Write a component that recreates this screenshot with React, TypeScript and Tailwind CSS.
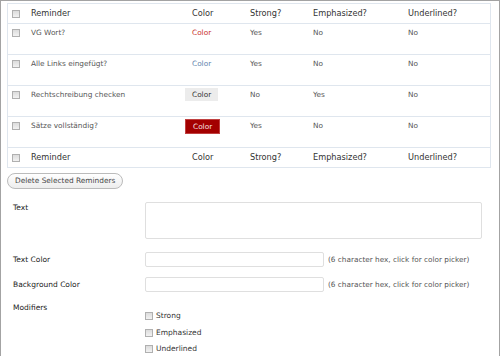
import React from "react";

const font = { fontFamily: '"DejaVu Sans", Verdana, sans-serif' };

type Row = {
  text: string;
  color: "red" | "blue" | "gray" | "darkred";
  strong: string;
  em: string;
  under: string;
};

const rows: Row[] = [
  { text: "VG Wort?", color: "red", strong: "Yes", em: "No", under: "No" },
  { text: "Alle Links eingefügt?", color: "blue", strong: "Yes", em: "No", under: "No" },
  { text: "Rechtschreibung checken", color: "gray", strong: "No", em: "Yes", under: "No" },
  { text: "Sätze vollständig?", color: "darkred", strong: "Yes", em: "No", under: "No" },
];

function Box() {
  return (
    <span className="block w-[8px] h-[8px] border border-[#b0b0b0] bg-gradient-to-b from-[#dcdcdc] to-[#f2f2f2]" />
  );
}

function ColorTag({ color }: { color: Row["color"] }) {
  const cls =
    color === "red"
      ? "text-[#c8322d]"
      : color === "blue"
      ? "text-[#6384ad]"
      : color === "gray"
      ? "bg-[#ececec] text-[#333]"
      : "bg-[#a30000] text-[#f5e0e0] border border-[#c04040]";
  return (
    <span className={`inline-block px-[7px] py-[2px] leading-[9px] ${cls}`}>Color</span>
  );
}

const grid = "grid grid-cols-[19px_154px_65px_63px_95px_1fr]";

function HeadRow({ last }: { last?: boolean }) {
  return (
    <div
      className={`${grid} items-center text-[8.2px] text-[#333] ${
        last ? "h-[19px]" : "h-[20px] border-b border-[#dfe6ee]"
      }`}
    >
      <div className="pl-[4px]">
        <Box />
      </div>
      <div className="pl-[4px]">Reminder</div>
      <div className="pl-[11px]">Color</div>
      <div className="pl-[4px]">Strong?</div>
      <div className="pl-[4px]">Emphasized?</div>
      <div className="pl-[4px]">Underlined?</div>
    </div>
  );
}

export default function App() {
  return (
    <div
      className="w-[500px] h-[356px] overflow-hidden bg-white border-l border-t border-r border-[#a3a3a3] pl-[6px] pr-[8px] pt-[2px]"
      style={font}
    >
      <div className="border border-[#dfe6ee] text-[7.35px] text-[#555]">
        <HeadRow />
        {rows.map((r) => (
          <div key={r.text} className={`${grid} h-[31px] border-b border-[#dfe6ee] leading-[9px]`}>
            <div className="pl-[4px] pt-[5px]">
              <Box />
            </div>
            <div className="pl-[4px] pt-[4px]">{r.text}</div>
            <div className="pl-[4px] pt-[2px]">
              <ColorTag color={r.color} />
            </div>
            <div className="pl-[4px] pt-[4px]">{r.strong}</div>
            <div className="pl-[4px] pt-[4px]">{r.em}</div>
            <div className="pl-[4px] pt-[4px]">{r.under}</div>
          </div>
        ))}
        <HeadRow last />
      </div>

      <button className="block mt-[5px] h-[16px] pl-[7px] pr-[7px] rounded-full border border-[#bbbbbb] bg-gradient-to-b from-white to-[#ededed] text-[7.4px] text-[#464646] leading-[14px]">
        Delete Selected Reminders
      </button>

      <div className="mt-[13px] text-[7.5px] text-[#222] leading-[12px]">
        <div className="flex">
          <div className="w-[138px] pl-[6px]">Text</div>
          <div className="w-[337px] h-[37px] border border-[#dfdfdf] rounded-[2px]" />
        </div>
        <div className="flex items-center mt-[13px]">
          <div className="w-[138px] pl-[6px]">Text Color</div>
          <div className="w-[179px] h-[15px] border border-[#dfdfdf] rounded-[2px]" />
          <span className="ml-[4px] text-[7.3px] text-[#555555]">(6 character hex, click for color picker)</span>
        </div>
        <div className="flex items-center mt-[10px]">
          <div className="w-[138px] pl-[6px]">Background Color</div>
          <div className="w-[179px] h-[15px] border border-[#dfdfdf] rounded-[2px]" />
          <span className="ml-[4px] text-[7.3px] text-[#555555]">(6 character hex, click for color picker)</span>
        </div>
        <div className="flex mt-[10px]">
          <div className="w-[138px] pl-[6px]">Modifiers</div>
          <div className="pt-[6px] text-[#333]">
            {["Strong", "Emphasized", "Underlined"].map((m) => (
              <div key={m} className="flex items-center gap-[3px] h-[16.5px]">
                <Box />
                <span>{m}</span>
              </div>
            ))}
          </div>
        </div>
      </div>
    </div>
  );
}
